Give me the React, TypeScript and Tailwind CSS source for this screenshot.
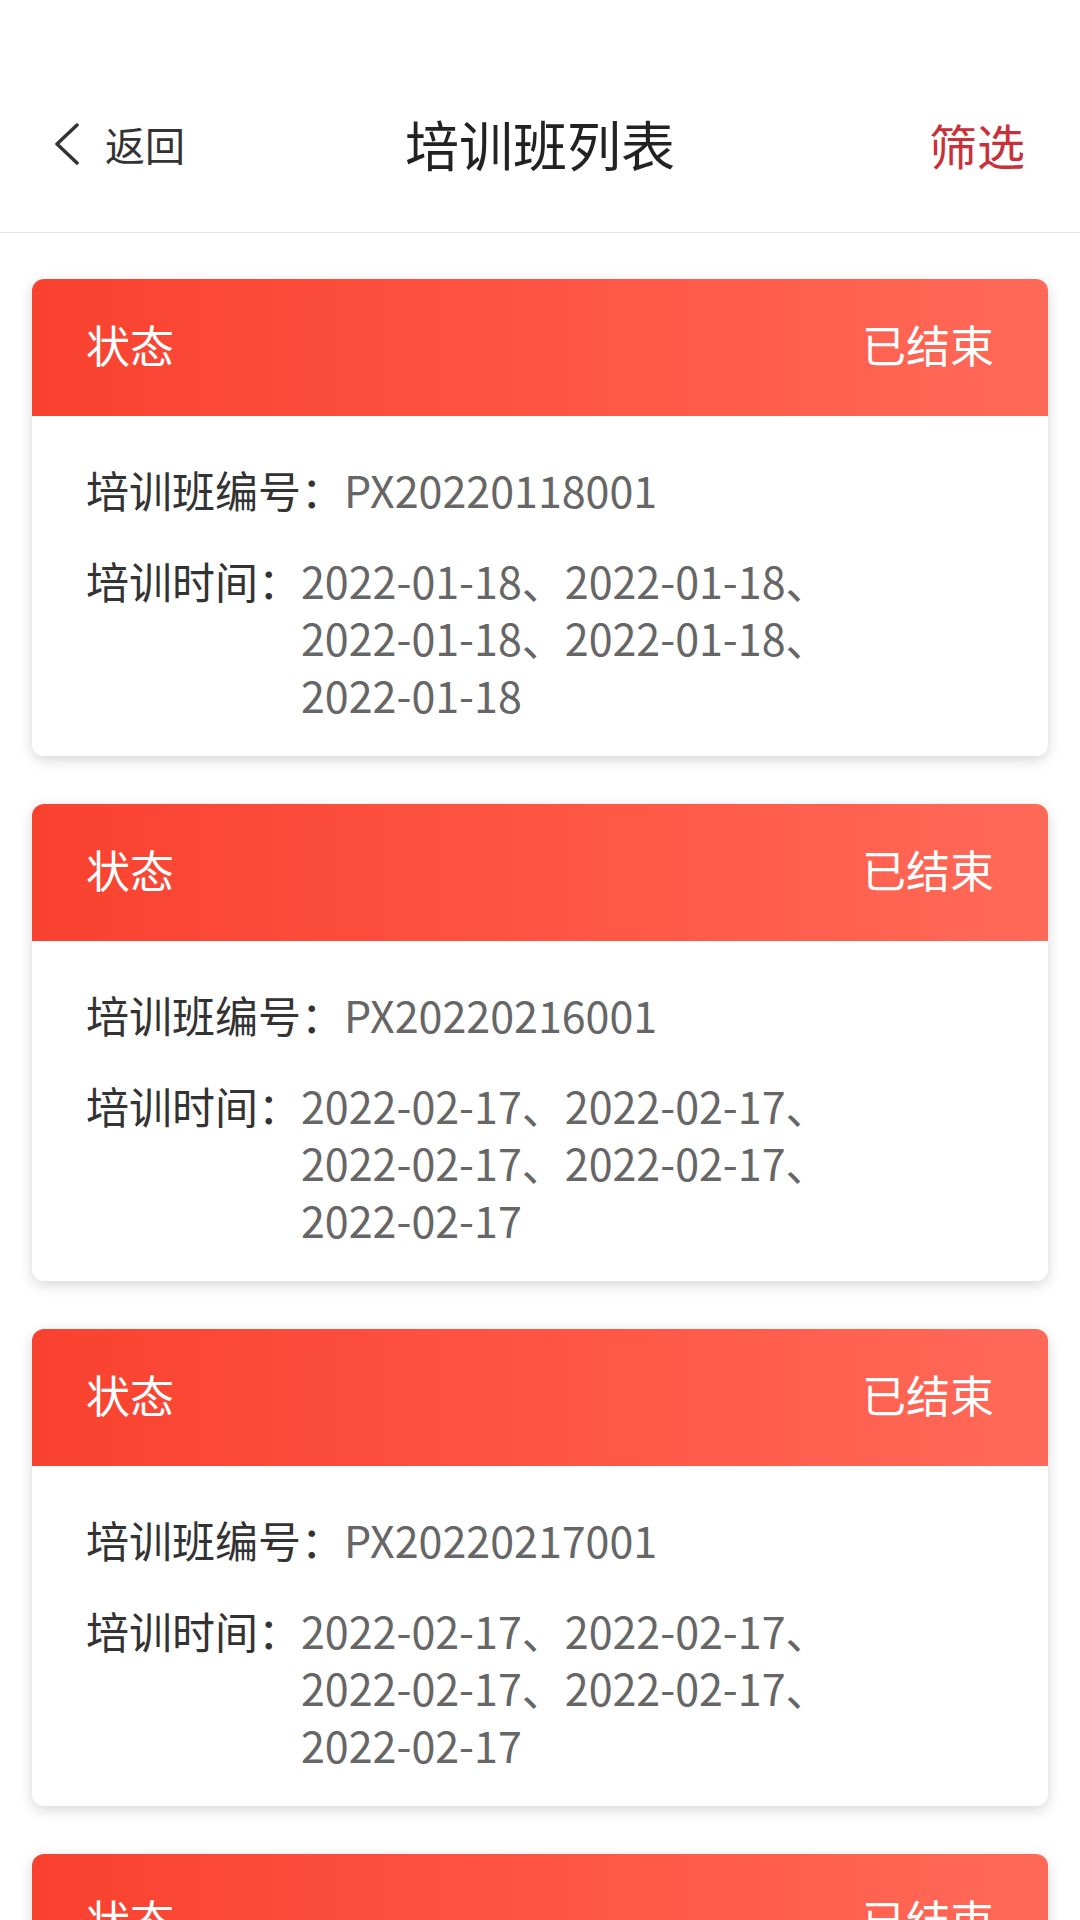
import React from 'react';

interface TrainingClass {
  id: string;
  code: string;
  status: string;
  dates: string[];
}

const classes: TrainingClass[] = [
  { id: '1', code: 'PX20220118001', status: '已结束', dates: Array(5).fill('2022-01-18') },
  { id: '2', code: 'PX20220216001', status: '已结束', dates: Array(5).fill('2022-02-17') },
  { id: '3', code: 'PX20220217001', status: '已结束', dates: Array(5).fill('2022-02-17') },
  { id: '4', code: 'PX20220218001', status: '已结束', dates: Array(5).fill('2022-02-18') },
];

// two dates per line, like the app wraps them
const dateLines = (dates: string[]) => {
  const lines: string[] = [];
  for (let i = 0; i < dates.length; i += 2) {
    const chunk = dates.slice(i, i + 2);
    const isLast = i + 2 >= dates.length;
    lines.push(chunk.join('、') + (isLast ? '' : '、'));
  }
  return lines;
};

const ClassCard: React.FC<{ item: TrainingClass }> = ({ item }) => (
  <div className="bg-white rounded-[12px] shadow-[0_4px_14px_rgba(0,0,0,0.16)] overflow-hidden">
    <div className="h-[137px] px-[54px] pb-[7px] flex items-center justify-between bg-gradient-to-r from-[#f9412f] via-[#ff5443] to-[#ff6958] text-white text-[44px] leading-none">
      <span>状态</span>
      <span>{item.status}</span>
    </div>
    <div className="px-[54px] pt-[45px] pb-[33px] text-[43px] leading-[57px]">
      <div className="flex">
        <span className="text-[#333]">培训班编号：</span>
        <span className="text-[#666]">{item.code}</span>
      </div>
      <div className="flex mt-[34px]">
        <span className="text-[#333] shrink-0">培训时间：</span>
        <div className="text-[#666]">
          {dateLines(item.dates).map((line, i) => (
            <div key={i}>{line}</div>
          ))}
        </div>
      </div>
    </div>
  </div>
);

const App: React.FC = () => {
  return (
    <div className="w-[1080px] h-[1920px] overflow-hidden bg-white font-['Noto_Sans_CJK_SC','Noto_Sans',sans-serif]">
      <div className="pt-[56px] border-b border-[#e2e2e2]">
        <div className="h-[176px] flex items-center justify-between px-[53px]">
          <div className="flex items-center w-[220px]">
            <svg width="28" height="42" viewBox="0 0 28 42" fill="none">
              <polyline points="24,2 4,21 24,40" stroke="#333" strokeWidth="3.5" strokeLinecap="round" strokeLinejoin="round" />
            </svg>
            <span className="ml-[24px] text-[40px] text-[#333] leading-none">返回</span>
          </div>
          <h1 className="text-[54px] text-[#222] leading-none">培训班列表</h1>
          <div className="w-[220px] flex justify-end pr-[2px]">
            <span className="text-[48px] text-[#c9303a] leading-none">筛选</span>
          </div>
        </div>
      </div>
      <div className="px-[32px] pt-[46px] flex flex-col gap-[48px]">
        {classes.map(item => (
          <ClassCard key={item.id} item={item} />
        ))}
      </div>
    </div>
  );
};

export default App;
